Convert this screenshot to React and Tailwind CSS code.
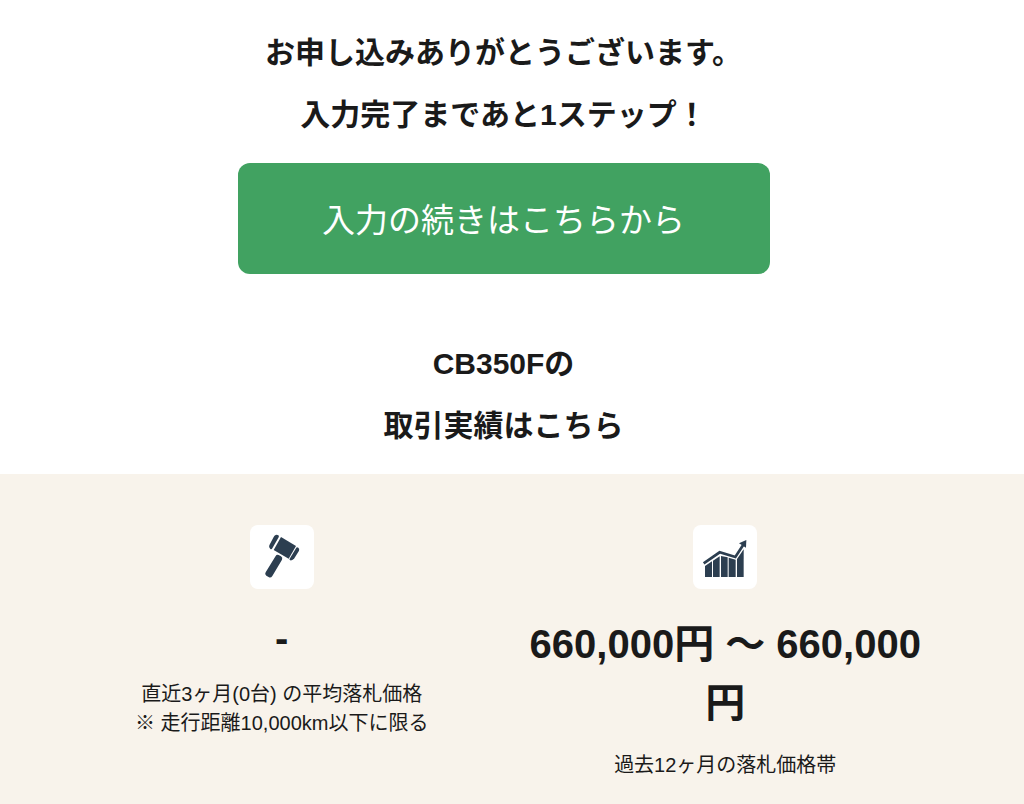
function GavelIcon() {
  return (
    <svg viewBox="30 30 192 192" className="size-16" aria-hidden="true">
      <g fill="#2c3e50">
        <path d="M123 66 L168 93 L146 131 L101 105 Z" />
        <path d="M107 60 Q111 58 115 61 Q118 63 116 67 L97 100 Q95 104 91 102 Q85 98 88 91 L101 66 Q103 61 107 60 Z" />
        <path d="M169 98 Q171 95 175 98 Q179 101 177 107 L163 130 Q158 137 151 136 Q147 135 149 131 Z" />
        <path d="M107 123 Q110 117 116 120 L123 124 Q129 128 126 134 L97 183 Q93 189 87 187 L79 182 Q73 178 77 172 Z" />
      </g>
    </svg>
  );
}

function ChartIcon() {
  return (
    <svg viewBox="30 30 192 192" className="size-16" aria-hidden="true">
      <g fill="#2c3e50">
        <path d="M66 153 L87 139 V186 H66 Z" />
        <path d="M90 137 L110 124 V186 H90 Z" />
        <path d="M114 123 L134 127 V186 H114 Z" />
        <path d="M137 128 L158 134 V186 H137 Z" />
        <path d="M162 132 L182 103 V186 H162 Z" />
        <path d="M190 75 L189 98 L168 85 Z" />
      </g>
      <path d="M62 145 L110 112 L157 126 L181 89" fill="none" stroke="#2c3e50" strokeWidth="8" />
    </svg>
  );
}

function Stat({ icon, value, valueClass, children }) {
  return (
    <div className="flex flex-col items-center px-5">
      <div className="rounded-lg bg-white">{icon}</div>
      <p className={`mt-[26px] text-[40px] font-bold ${valueClass}`}>{value}</p>
      <p className="mt-[18px] text-xl leading-[29px]">{children}</p>
    </div>
  );
}

export default function App() {
  return (
    <main className="min-h-screen bg-white text-center font-['Liberation_Sans','Noto_Sans_CJK_JP',sans-serif] text-[#1a1a1a]">
      <section className="flex flex-col items-center pt-[22px] pr-[17px] pb-[17px]">
        <h1 className="text-[30px] leading-[62px] font-bold">
          お申し込みありがとうございます。
          <br />
          入力完了まであと1ステップ！
        </h1>
        <a
          href="#continue"
          className="mt-[17px] w-full max-w-[532px] rounded-xl bg-[#41a261] pt-[33px] pb-7 text-[33px] leading-[50px] text-white"
        >
          入力の続きはこちらから
        </a>
        <h2 className="mt-[59px] text-[30px] leading-[62px] font-bold">
          CB350Fの
          <br />
          取引実績はこちら
        </h2>
      </section>
      <section className="bg-[#f8f3eb] pt-[51px] pr-[77px] pb-6 pl-[60px]">
        <div className="grid grid-cols-2">
          <Stat icon={<GavelIcon />} value="-" valueClass="leading-[47px]">
            直近3ヶ月(0台) の平均落札価格
            <br />※ 走行距離10,000km以下に限る
          </Stat>
          <Stat icon={<ChartIcon />} value="660,000円 ～ 660,000円" valueClass="leading-[59px]">
            過去12ヶ月の落札価格帯
          </Stat>
        </div>
      </section>
    </main>
  );
}
